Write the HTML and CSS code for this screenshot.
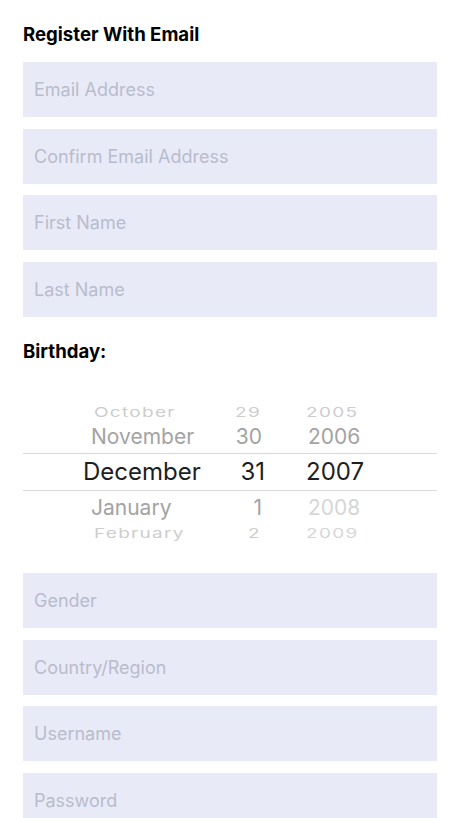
FILE: index.html
```html
<!DOCTYPE html>
<html>
<head>
<meta charset="utf-8">
<link rel="stylesheet" href="styles.css">
</head>
<body>
<div class="page">
  <h1 class="title">Register With Email</h1>
  <div class="fields">
    <div class="field">Email Address</div>
    <div class="field">Confirm Email Address</div>
    <div class="field">First Name</div>
    <div class="field">Last Name</div>
  </div>
  <h2 class="label">Birthday:</h2>
  <div class="picker">
    <div class="row far top">
      <span class="m">October</span><span class="d">29</span><span class="y">2005</span>
    </div>
    <div class="row near">
      <span class="m">November</span><span class="d">30</span><span class="y">2006</span>
    </div>
    <div class="row sel">
      <span class="m">December</span><span class="d">31</span><span class="y">2007</span>
    </div>
    <div class="row near">
      <span class="m">January</span><span class="d">1</span><span class="y dim">2008</span>
    </div>
    <div class="row far bottom">
      <span class="m">February</span><span class="d">2</span><span class="y dim">2009</span>
    </div>
  </div>
  <div class="fields lower">
    <div class="field">Gender</div>
    <div class="field">Country/Region</div>
    <div class="field">Username</div>
    <div class="field">Password</div>
  </div>
</div>
</body>
</html>
```
FILE: styles.css
```css
html, body {
  margin: 0;
  padding: 0;
  background: #ffffff;
}
body {
  font-family: Inter, "Noto Sans", "Liberation Sans", sans-serif;
  width: 460px;
  height: 818px;
  overflow: hidden;
}
.page {
  padding: 23px 23px 0 23px;
}
.title, .label {
  margin: 0;
  font-size: 18.6px;
  font-weight: 700;
  line-height: 22px;
  color: #000;
}
.fields {
  display: flex;
  flex-direction: column;
  gap: 11.67px;
  margin-top: 17px;
}
.field {
  height: 55px;
  background: #e8eaf8;
  color: #b9bccb;
  font-size: 18px;
  display: flex;
  align-items: center;
  padding-left: 11px;
}
.label {
  margin-top: 23px;
}
.picker {
  margin-top: 36px;
  display: flex;
  flex-direction: column;
}
.row {
  display: grid;
  grid-template-columns: 68px 116px 55px 1fr;
  align-items: center;
  color: #a3a3a3;
  font-size: 21px;
}
.row .m { grid-column: 2; }
.row .d { grid-column: 3; text-align: right; }
.row .y { grid-column: 4; padding-left: 46px; }
.row .dim { color: #d6d6d6; }
.far {
  height: 22px;
  font-size: 19px;
  color: #cdcdcd;
  letter-spacing: 1.3px;
  transform: scaleY(0.7);
}
.far .m { padding-left: 3px; }
.far .d { margin-right: 1px; }
.far .y { padding-left: 44px; }
.far.top { transform-origin: center bottom; }
.far.bottom { transform-origin: center top; }
.near { height: 33px; }
.row.near:nth-child(4) { height: 34px; }
.sel {
  height: 36px;
  border-top: 1px solid #d9d9d9;
  border-bottom: 1px solid #d9d9d9;
  color: #1e1e1e;
  font-size: 24px;
}
.sel .m { margin-left: -8px; }
.sel .d { margin-right: -3px; }
.sel .y { padding-left: 44px; }
.lower {
  margin-top: 26px;
}
```
